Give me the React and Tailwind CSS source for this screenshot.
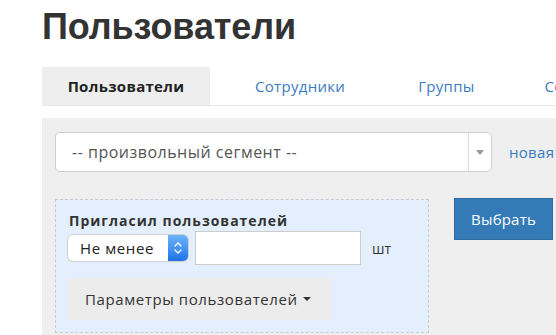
export default function App() {
  return (
    <div className="h-[335px] w-[556px] overflow-hidden bg-white pl-[42px] text-[#333]" style={{ fontFamily: '"Open Sans", "Liberation Sans", Arial, sans-serif' }}>
      <h1 className="pt-[7px] text-[36px] font-bold leading-[40px] tracking-[-0.1px] text-[#333]" style={{ fontFamily: '"Liberation Sans", Arial, sans-serif' }}>Пользователи</h1>

      <div className="mt-[20px] flex w-[700px] items-stretch border-b border-[#e6e6e6] text-[15px] leading-[18px] tracking-[0.3px]">
        <div className="flex h-[38px] w-[168px] items-center justify-center bg-[#eeeeee] font-bold text-[#222]">Пользователи</div>
        <div className="ml-[45px] flex items-center text-[#3a7cc4]">Сотрудники</div>
        <div className="ml-[73px] flex items-center text-[#3a7cc4]">Группы</div>
        <div className="ml-[70px] flex items-center text-[#3a7cc4]">Сегменты</div>
      </div>

      <div className="mt-[12px] w-[700px] bg-[#efefef] pl-[13px] pt-[14px] pb-[20px]">
        <div className="flex items-center">
          <div className="flex h-[40px] w-[437px] items-stretch rounded-[5px] border border-[#cfcfcf] bg-white">
            <div className="flex flex-1 items-center pl-[16px] text-[16px] tracking-[0.5px] text-[#555]">-- произвольный сегмент --</div>
            <div className="flex w-[23px] items-center justify-center border-l border-[#dcdcdc]">
              <span className="h-0 w-0 border-x-[4px] border-t-[5px] border-x-transparent border-t-[#999]" />
            </div>
          </div>
          <a className="ml-[17px] text-[15px] tracking-[0.3px] text-[#3a7cc4]">новая</a>
        </div>

        <div className="mt-[27px] flex items-start">
          <div className="h-[134px] w-[374px] border border-dashed border-[#cacaca] bg-[#e3effc] pl-[12px] pt-[11px]">
            <div className="pl-[1px] text-[14px] font-bold leading-[19px] tracking-[1px] text-[#333]">Пригласил пользователей</div>
            <div className="mt-[1px] flex items-center">
              <div className="flex h-[26px] w-[120px] items-stretch overflow-hidden rounded-[5px] bg-white shadow-[0_0_0_1px_#d0d0d0,0_1px_1px_rgba(0,0,0,0.15)]">
                <div className="flex flex-1 items-center pl-[12px] text-[15px] tracking-[0.6px] text-[#222]">Не менее</div>
                <div className="flex w-[20px] flex-col items-center justify-center bg-gradient-to-b from-[#6cb3fa] to-[#1a73e8]">
                  <svg width="8" height="14" viewBox="0 0 8 14" fill="none" stroke="white" strokeWidth="1.4" strokeLinecap="round" strokeLinejoin="round">
                    <path d="M1 5l3-3 3 3" />
                    <path d="M1 9l3 3 3-3" />
                  </svg>
                </div>
              </div>
              <div className="ml-[7px] h-[34px] w-[166px] border border-[#cccccc] bg-white" />
              <span className="ml-[11px] text-[14px] text-[#333]">шт</span>
            </div>
            <button className="mt-[13px] flex h-[42px] w-[263px] items-center bg-[#ececec] pl-[17px] text-[15px] tracking-[0.6px] text-[#333]">
              Параметры пользователей
              <span className="ml-[5px] h-0 w-0 border-x-[4px] border-t-[4px] border-x-transparent border-t-[#333]" />
            </button>
          </div>
          <button className="ml-[25px] mt-[-1px] flex h-[42px] w-[99px] items-center justify-center border border-[#2e6da4] bg-[#337ab7] text-[15px] tracking-[0.2px] text-white">Выбрать</button>
        </div>
      </div>
    </div>
  );
}
